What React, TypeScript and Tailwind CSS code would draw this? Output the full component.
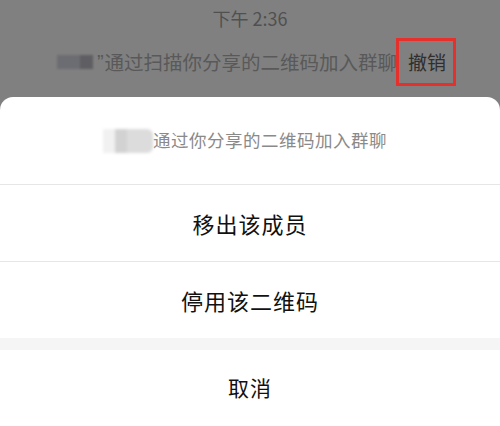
const font = "font-['Noto_Sans_CJK_SC','Noto_Sans',sans-serif]";

function SheetRow({ label, size }: { label: string; size: string }) {
  return (
    <div className={`flex h-[76px] items-center justify-center text-[#111] ${size}`}>
      {label}
    </div>
  );
}

export default function App() {
  return (
    <div className={`flex h-[426px] w-[500px] flex-col overflow-hidden bg-[#808080] ${font}`}>
      {/* dimmed chat behind the sheet */}
      <div className="flex h-[98px] flex-col items-center">
        <div className="mt-[4px] text-[18px] leading-[28px] text-[#505050]">下午 2:36</div>
        <div className="mt-[6px] flex items-center pl-[13px]">
          <div className="flex h-[14px] w-[36px] blur-[1px]">
            <div className="w-[23px] bg-[#6c6c73]" />
            <div className="w-[13px] bg-[#5e5e63]" />
          </div>
          <span className="ml-[4px] mr-[1px] font-['Liberation_Sans',sans-serif] text-[20px] leading-none text-[#595959]">
            ”
          </span>
          <span className="text-[19.5px] leading-none text-[#595959]">
            通过扫描你分享的二维码加入群聊
          </span>
          <span className="-ml-[1px] flex h-[48px] w-[60px] items-center border-[3px] border-[#e5302b] pl-[9px] text-[19px] text-[#2f2f2f]">
            撤销
          </span>
        </div>
      </div>

      {/* action sheet */}
      <div className="flex flex-1 flex-col rounded-t-[13px] bg-white">
        <div className="flex h-[88px] items-center justify-center border-b border-[#e6e6e6] pr-[10px]">
          <div className="flex h-[24px] w-[50px] blur-[1.5px]">
            <div className="w-[12px] bg-[#f1f1f1]" />
            <div className="w-[12px] bg-[#d2d2d2]" />
            <div className="w-[26px] rounded-r-[6px] bg-[#dcdcdc]" />
          </div>
          <span className="text-[17.5px] tracking-[0.5px] text-[#8a8a8a]">通过你分享的二维码加入群聊</span>
        </div>
        <div className="border-b border-[#e6e6e6]">
          <SheetRow label="移出该成员" size="text-[22px] tracking-[1px]" />
        </div>
        <SheetRow label="停用该二维码" size="text-[22px] tracking-[1px]" />
        <div className="h-[12px] bg-[#f5f5f5]" />
        <SheetRow label="取消" size="text-[21px] tracking-[1px]" />
      </div>
    </div>
  );
}
